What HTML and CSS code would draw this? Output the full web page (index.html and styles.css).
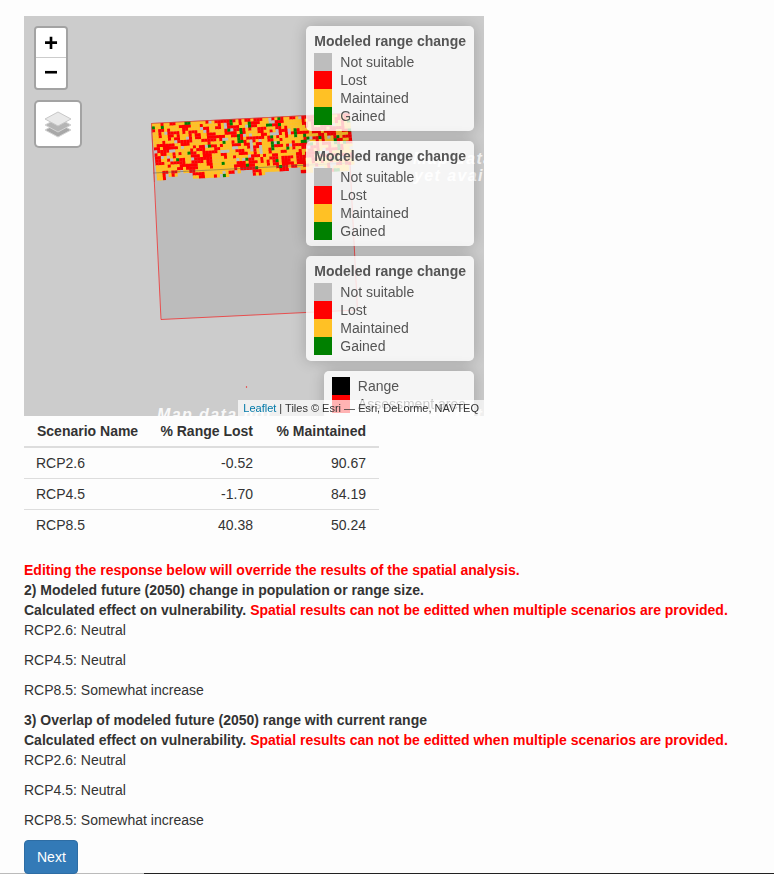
FILE: index.html
```html
<!DOCTYPE html>
<html lang="en">
<head>
<meta charset="utf-8">
<title>Spatial analysis results</title>
<link rel="stylesheet" href="styles.css">
</head>
<body>
<main class="page">
  <section class="map">
    <div class="tile-text tile-a">Map data not<span class="tile-line">yet available</span></div>
    <div class="tile-text tile-b">Map data not<span class="tile-line">yet available</span></div>
    <div class="tile-text tile-c">Map data not<span class="tile-line">yet available</span></div>
    <svg class="overlay" width="460" height="400" viewBox="0 0 460 400" aria-hidden="true">
      <polygon class="area" points="127.5,107.5 323.5,97.5 333.5,294 137,303.5"/>
      <circle class="speck" cx="222.5" cy="371" r="0.7"/>
    </svg>
    <canvas class="raster" id="raster" width="460" height="400"></canvas>
    <svg class="overlay" width="460" height="400" viewBox="0 0 460 400" aria-hidden="true">
      <polyline class="raster-line" points="129,157 324,147"/>
      <polyline class="raster-edge" points="127.5,107.5 323.5,97.5"/>
      <polyline class="raster-edge" points="127.5,107.5 130.500,166"/>
    </svg>

    <div class="zoom-control">
      <div class="zoom-btn">+</div>
      <div class="zoom-btn">−</div>
    </div>
    <div class="layers-control">
      <svg width="28" height="27" viewBox="0 0 28 27" aria-hidden="true">
        <path class="layer-low" d="M14 12 L27 19 L14 26 L1 19 Z"/>
        <path class="layer-mid" d="M14 7 L27 14 L14 21 L1 14 Z"/>
        <path class="layer-top" d="M14 1 L27 8 L14 15 L1 8 Z"/>
      </svg>
    </div>

    <div class="legends">
      <div class="legend">
        <div class="legend-title">Modeled range change</div>
        <div class="legend-row"><i class="swatch none"></i>Not suitable</div>
        <div class="legend-row"><i class="swatch lost"></i>Lost</div>
        <div class="legend-row"><i class="swatch kept"></i>Maintained</div>
        <div class="legend-row"><i class="swatch gain"></i>Gained</div>
      </div>
      <div class="legend">
        <div class="legend-title">Modeled range change</div>
        <div class="legend-row"><i class="swatch none"></i>Not suitable</div>
        <div class="legend-row"><i class="swatch lost"></i>Lost</div>
        <div class="legend-row"><i class="swatch kept"></i>Maintained</div>
        <div class="legend-row"><i class="swatch gain"></i>Gained</div>
      </div>
      <div class="legend">
        <div class="legend-title">Modeled range change</div>
        <div class="legend-row"><i class="swatch none"></i>Not suitable</div>
        <div class="legend-row"><i class="swatch lost"></i>Lost</div>
        <div class="legend-row"><i class="swatch kept"></i>Maintained</div>
        <div class="legend-row"><i class="swatch gain"></i>Gained</div>
      </div>
      <div class="legend">
        <div class="legend-row"><i class="swatch range"></i>Range</div>
        <div class="legend-row"><i class="swatch lost"></i>Assessment area</div>
      </div>
    </div>

    <div class="attribution"><a href="#">Leaflet</a> | Tiles © Esri — Esri, DeLorme, NAVTEQ</div>
  </section>

  <table class="results">
    <thead>
      <tr><th class="col-name">Scenario Name</th><th class="col-lost num">% Range Lost</th><th class="col-kept num">% Maintained</th></tr>
    </thead>
    <tbody>
      <tr><td>RCP2.6</td><td class="num">-0.52</td><td class="num">90.67</td></tr>
      <tr><td>RCP4.5</td><td class="num">-1.70</td><td class="num">84.19</td></tr>
      <tr><td>RCP8.5</td><td class="num">40.38</td><td class="num">50.24</td></tr>
    </tbody>
  </table>

  <section class="answers">
    <div class="warn">Editing the response below will override the results of the spatial analysis.</div>
    <div class="question">2) Modeled future (2050) change in population or range size.</div>
    <div class="question">Calculated effect on vulnerability. <span class="warn">Spatial results can not be editted when multiple scenarios are provided.</span></div>
    <p>RCP2.6: Neutral</p>
    <p>RCP4.5: Neutral</p>
    <p>RCP8.5: Somewhat increase</p>
    <div class="question">3) Overlap of modeled future (2050) range with current range</div>
    <div class="question">Calculated effect on vulnerability. <span class="warn">Spatial results can not be editted when multiple scenarios are provided.</span></div>
    <p>RCP2.6: Neutral</p>
    <p>RCP4.5: Neutral</p>
    <p>RCP8.5: Somewhat increase</p>
  </section>

  <button class="next" type="button">Next</button>
</main>
<div class="bottom-rule"><span class="rule-light"></span><span class="rule-dark"></span></div>
<script src="script.js"></script>
</body>
</html>
```
FILE: styles.css
```css
* { box-sizing: border-box; }
html, body { margin: 0; height: 874px; overflow: hidden; }
body {
  position: relative;
  background: #fdfdfd;
  color: #333;
  font: 14px/20px "Liberation Sans", Arial, sans-serif;
}
.page { padding: 16px 24px 0; display: flex; flex-direction: column; align-items: flex-start; }

/* Map */
.map { position: relative; width: 460px; height: 400px; overflow: hidden; background: #ccc; }
.overlay, .raster { position: absolute; left: 0; top: 0; }
.area { fill: rgba(0, 0, 0, 0.08); stroke: rgba(255, 0, 0, 0.6); stroke-width: 1; }
.speck { fill: #e22; }
.raster-line { fill: none; stroke: rgba(90, 90, 90, 0.5); stroke-width: 1; }
.raster-edge { fill: none; stroke: rgba(200, 60, 60, 0.5); stroke-width: 1; }

.tile-text {
  position: absolute;
  color: rgba(255, 255, 255, 0.9);
  font: italic bold 16px/17px "Liberation Sans", Arial, sans-serif;
  letter-spacing: 1.4px;
  white-space: nowrap;
}
.tile-line { display: block; margin-left: 1px; }
.tile-a { left: 389px; top: 134px; }
.tile-b { left: 133px; top: 390px; }
.tile-c { left: 389px; top: 390px; }

.zoom-control {
  position: absolute; left: 10px; top: 10px; width: 34px;
  border: 2px solid rgba(0, 0, 0, 0.2); border-radius: 4px;
  background-clip: padding-box;
}
.zoom-btn {
  height: 30px; background: #fff; color: #000; text-align: center;
  font: bold 24px/29px "Liberation Sans", Arial, sans-serif;
}
.zoom-btn:first-child { border-bottom: 1px solid #ccc; border-radius: 2px 2px 0 0; }
.zoom-btn:last-child { border-radius: 0 0 2px 2px; line-height: 28px; }

.layers-control {
  position: absolute; left: 10px; top: 84px; width: 48px; height: 48px;
  border: 2px solid rgba(0, 0, 0, 0.2); border-radius: 5px;
  display: flex; align-items: center; justify-content: center;
  background: #fff; background-clip: padding-box;
}
.layer-top { fill: #e9e9e9; stroke: #c8c8c8; stroke-width: 1; }
.layer-mid { fill: #b5b5b5; stroke: #d4d4d4; stroke-width: 1; }
.layer-low { fill: #a8a8a8; stroke: #d4d4d4; stroke-width: 1; }

.legends {
  position: absolute; right: 10px; top: 10px;
  display: flex; flex-direction: column; align-items: flex-end; gap: 10px;
}
.legend {
  padding: 6px 8px; border-radius: 5px;
  background: rgba(255, 255, 255, 0.8);
  box-shadow: 0 0 15px rgba(0, 0, 0, 0.2);
  color: #555; font-size: 14px; line-height: 18px;
}
.legend-title { font-weight: bold; height: 21px; white-space: nowrap; }
.legend-row { display: flex; height: 18px; white-space: nowrap; }
.swatch { flex: none; width: 18px; height: 18px; margin-right: 8px; }
.none { background: #bdbdbd; }
.lost { background: #f00; }
.kept { background: #ffc125; }
.gain { background: #008000; }
.range { background: #000; }

.attribution {
  position: absolute; right: 0; bottom: 0; height: 16px; padding: 0 5px;
  background: rgba(255, 255, 255, 0.7); color: #333;
  font-size: 11px; line-height: 16px; white-space: nowrap;
}
.attribution a { color: #0078a8; text-decoration: none; }

/* Table */
.results { width: 355px; border-collapse: collapse; table-layout: fixed; }
.results th, .results td { padding: 5px 13px 5px 12px; text-align: left; white-space: nowrap; }
.results th { border-bottom: 2px solid #ddd; height: 31px; padding: 5px 13px 5px 13px; }
.results td { border-top: 1px solid #ddd; height: 31px; }
.results tbody tr:first-child td { border-top: 0; height: 30px; }
.results .num { text-align: right; padding-left: 0; }
.col-name { width: 126px; }
.col-lost { width: 116px; }
.col-kept { width: 113px; }

/* Answers */
.answers { margin-top: 19px; }
.answers p { margin: 0 0 10px; }
.warn { color: #f00; font-weight: bold; }
.question { font-weight: bold; }

.next {
  width: 54px; height: 34px; padding: 6px 12px;
  background: #337ab7; border: 1px solid #2e6da4; border-radius: 4px;
  color: #fff; font: 14px/20px "Liberation Sans", Arial, sans-serif;
  position: relative; z-index: 1;
}
.bottom-rule { position: absolute; left: 0; right: 0; bottom: 0; height: 1px; display: flex; }
.rule-light { width: 144px; background: #bbb; }
.rule-dark { flex: 1; background: #222; }
```
FILE: script.js
```js
(function () {
  var canvas = document.getElementById('raster');
  var ctx = canvas.getContext('2d');
  var seed = 20500;
  function rnd() {
    seed = (seed * 1664525 + 1013904223) >>> 0;
    return seed / 4294967296;
  }
  function pick() {
    var v = rnd();
    return v < 0.46 ? '#ffc125' : v < 0.86 ? '#ff0000' : v < 0.94 ? '#bdbdbd' : '#008000';
  }
  var cell = 3;
  var cols = 66;
  var rows = 19;
  var chunk = 0;
  var previous = [];
  ctx.translate(127.5, 107.5);
  ctx.rotate(-0.0505);
  for (var c = 0; c < cols; c++) {
    if (c % 4 === 0) chunk = rnd() < 0.6 ? 0 : 1 + Math.floor(rnd() * 2);
    var depth = rows - chunk;
    var above = null;
    var current = [];
    for (var r = 0; r < depth; r++) {
      var w = rnd();
      var color = w < 0.18 && previous[r] ? previous[r] : w < 0.32 && above ? above : pick();
      current[r] = color;
      above = color;
      ctx.fillStyle = color;
      ctx.fillRect(c * cell + r * 0.15, r * cell, cell + 0.3, cell + 0.3);
    }
    previous = current;
  }
})();
```
